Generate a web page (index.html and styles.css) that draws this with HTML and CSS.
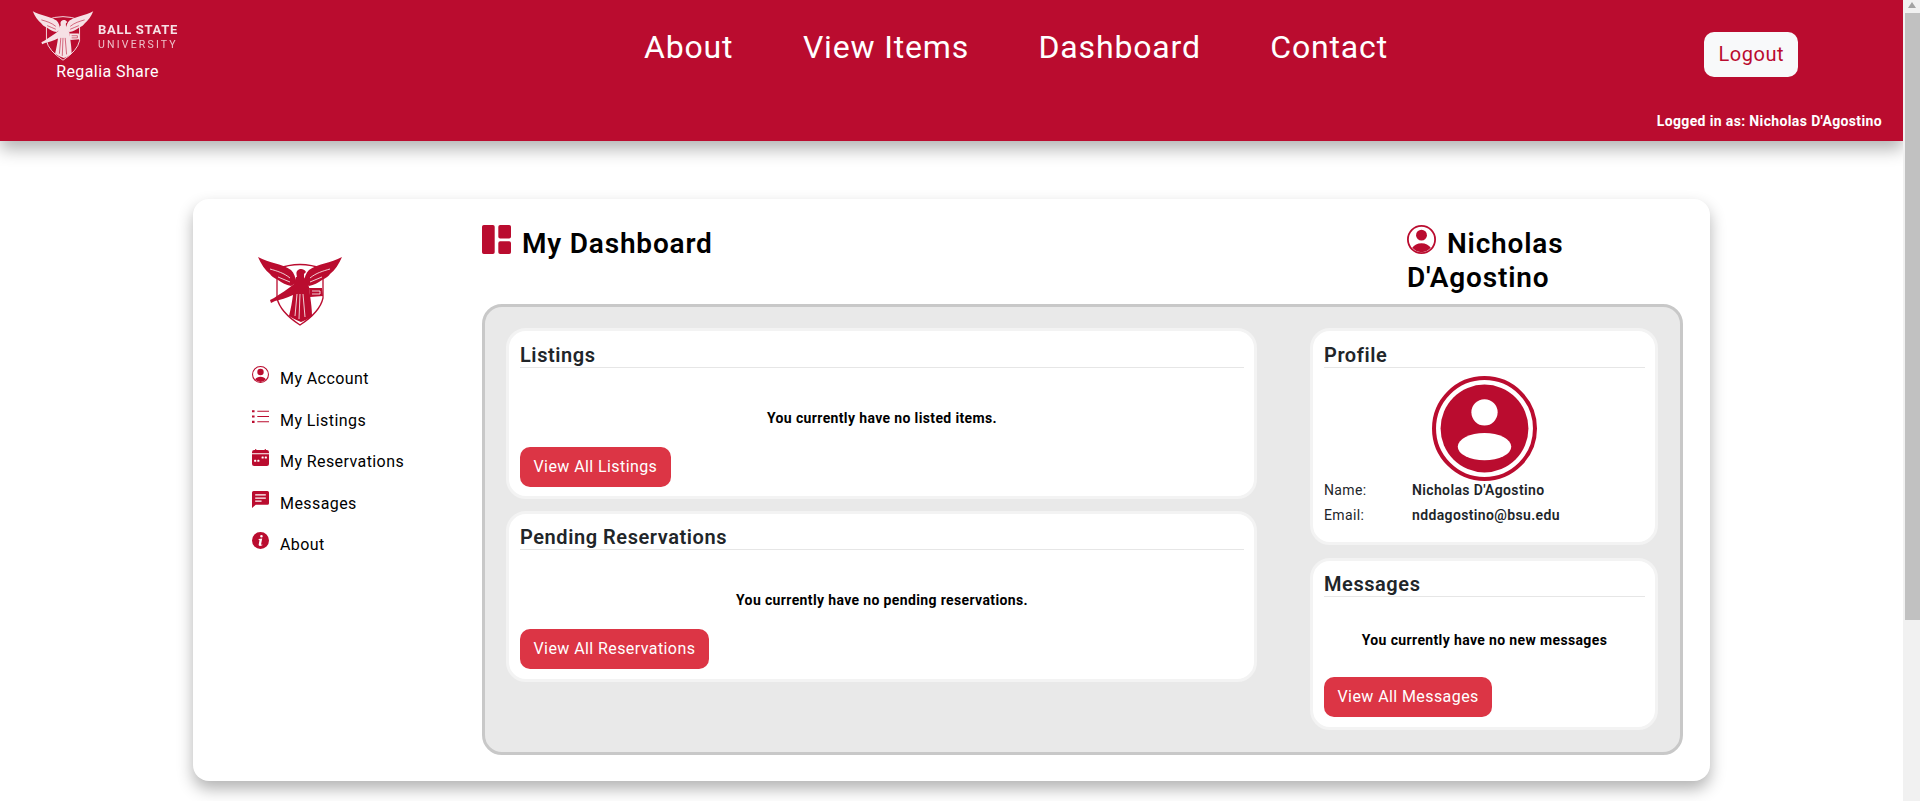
FILE: index.html
```html
<!DOCTYPE html>
<html lang="en">
<head>
    <meta charset="UTF-8">
    <meta name="viewport" content="width=device-width, initial-scale=1.0">
    <title>Regalia Share - My Dashboard</title>
    <link rel="stylesheet" href="styles.css">
</head>
<body>
    <svg class="icon-defs" width="0" height="0">
        <symbol id="emblem" viewBox="0 0 100 80">
            <path d="M27 19 Q50 10 73 19 L73 48 Q70 62 50 75 Q30 62 27 48 Z" fill="none" stroke="currentColor" stroke-width="1.3"/>
            <path d="M8 7 C19 13 33 14 41 20 C44 23 46 28 46 33 L41 36 C36 35 32 33 28 30 C24 28 21 26 20 24 C15 20 11 14 8 7 Z" fill="currentColor"/>
            <path d="M92 7 C81 13 67 14 59 20 C56 23 54 28 54 33 L59 36 C64 35 68 33 72 30 C76 28 79 26 80 24 C85 20 89 14 92 7 Z" fill="currentColor"/>
            <path d="M20 19 C27 21 34 23 40 28 M28 27 C32 29 36 30 40 32 M80 19 C73 21 66 23 60 28 M72 27 C68 29 64 30 60 32" fill="none" stroke="var(--cut)" stroke-width=".8"/>
            <path d="M46.500 24 C46 19 53 17 56 22 L54 24 L54 28 L47 28 Z" fill="currentColor"/>
            <path d="M46 27 L54 27 C56 31 58 34 59 37 L60 45 C61 52 62 60 62 66 C58 69 54 71 51 72 C46 70 42 68 39 66 C41 58 42 52 43 45 C37 48 30 50 25 51 L21 53 L20 50 L24 48 C30 44 38 39 44 34 Z" fill="currentColor"/>
            <path d="M59 38 L72 38 L73 46 L60 47 Z" fill="currentColor"/>
            <path d="M47 44 L45 66 M50 44 L49 69 M53 44 L55 67 M62 41 L70 41 L70 44 L62 44" fill="none" stroke="var(--cut)" stroke-width=".8"/>
        </symbol>
        <symbol id="person-circle" viewBox="0 0 16 16">
            <circle cx="8" cy="5.6" r="3" fill="currentColor"/>
            <path d="M2.9 12.6C3.9 10.9 5.8 10 8 10s4.100.9 5.100 2.600A7 7 0 0 1 8 15a7 7 0 0 1-5.100-2.400z" fill="currentColor"/>
            <circle cx="8" cy="8" r="7.500" fill="none" stroke="currentColor"/>
        </symbol>
        <symbol id="list-ul" viewBox="0 0 16 16">
            <path d="M5 2.500h11v1H5zM5 7.500h11v1H5zM5 12.500h11v1H5z" fill="currentColor"/>
            <path d="M0 2h2.400v2H0zM0 7h2.400v2H0zM0 12h2.400v2H0z" fill="currentColor"/>
        </symbol>
        <symbol id="calendar" viewBox="0 0 16 16">
            <path d="M3 0h1v1h8V0h1v1h1a2 2 0 0 1 2 2v1H0V3a2 2 0 0 1 2-2h1zM0 5h16v9a2 2 0 0 1-2 2H2a2 2 0 0 1-2-2zm9.500 2a.5.5 0 0 0-.5.5v1c0 .3.200.5.500.5h1c.3 0 .5-.2.500-.5v-1a.5.5 0 0 0-.5-.5zm3 0a.5.5 0 0 0-.5.5v1c0 .3.200.5.500.5h1c.3 0 .5-.2.500-.5v-1a.5.5 0 0 0-.5-.5zm-10 3a.5.5 0 0 0-.5.5v1c0 .3.200.5.500.5h1c.3 0 .5-.2.500-.5v-1a.5.5 0 0 0-.5-.5zm3 0a.5.5 0 0 0-.5.5v1c0 .3.200.5.500.5h1c.3 0 .5-.2.500-.5v-1a.5.5 0 0 0-.5-.5z" fill="currentColor" fill-rule="evenodd"/>
        </symbol>
        <symbol id="chat" viewBox="0 0 16 16">
            <path d="M1.500 0A1.500 1.500 0 0 0 0 1.500V16l3.500-3h11a1.500 1.500 0 0 0 1.500-1.500v-10A1.500 1.500 0 0 0 14.500 0zM3 3h10v1.200H3zM3 6h10v1.200H3zM3 9h6v1.200H3z" fill="currentColor" fill-rule="evenodd"/>
        </symbol>
        <symbol id="info" viewBox="0 0 16 16">
            <path d="M8 0a8 8 0 1 0 0 16A8 8 0 0 0 8 0zm.9 2.800a1.200 1.200 0 1 1 0 2.400 1.200 1.200 0 0 1 0-2.400zM6.300 6.600l3.300-.4-1 5.200c-.1.500.1.700.4.600l.8-.3-.1.800c-.9.500-1.500.7-2.200.7-.9 0-1.400-.6-1.200-1.500l.7-3.700c0-.3-.1-.4-.4-.4l-.4-.1z" fill="currentColor" fill-rule="evenodd"/>
        </symbol>
        <symbol id="dashboard" viewBox="0 0 16 16">
            <path d="M1 0h5a1 1 0 0 1 1 1v14a1 1 0 0 1-1 1H1a1 1 0 0 1-1-1V1a1 1 0 0 1 1-1zM10 0h5a1 1 0 0 1 1 1v5.500a1 1 0 0 1-1 1h-5a1 1 0 0 1-1-1V1a1 1 0 0 1 1-1zM10 9h5a1 1 0 0 1 1 1v5a1 1 0 0 1-1 1h-5a1 1 0 0 1-1-1v-5a1 1 0 0 1 1-1z" fill="currentColor"/>
        </symbol>
    </svg>

    <div class="page">
        <header class="site-header">
            <a class="brand" href="#">
                <span class="brand-logo">
                    <svg class="brand-emblem"><use href="#emblem"/></svg>
                    <span class="brand-words">
                        <span class="brand-ball">BALL STATE</span>
                        <span class="brand-uni">UNIVERSITY</span>
                    </span>
                </span>
                <span class="brand-name">Regalia Share</span>
            </a>
            <nav class="main-nav">
                <a href="#">About</a>
                <a href="#">View Items</a>
                <a href="#">Dashboard</a>
                <a href="#">Contact</a>
            </nav>
            <a class="logout" href="#">Logout</a>
            <p class="logged-in">Logged in as: Nicholas D'Agostino</p>
        </header>

        <main class="dash-card">
            <aside class="side">
                <svg class="side-emblem"><use href="#emblem"/></svg>
                <ul class="side-menu">
                    <li><svg><use href="#person-circle"/></svg><a href="#">My Account</a></li>
                    <li><svg><use href="#list-ul"/></svg><a href="#">My Listings</a></li>
                    <li><svg><use href="#calendar"/></svg><a href="#">My Reservations</a></li>
                    <li><svg><use href="#chat"/></svg><a href="#">Messages</a></li>
                    <li><svg><use href="#info"/></svg><a href="#">About</a></li>
                </ul>
            </aside>

            <section class="dash-main">
                <div class="dash-head">
                    <h3 class="dash-title"><svg><use href="#dashboard"/></svg>My Dashboard</h3>
                    <h3 class="dash-user"><svg><use href="#person-circle"/></svg>Nicholas D'Agostino</h3>
                </div>

                <div class="panel-wrap">
                    <div class="col-left">
                        <div class="box">
                            <h5>Listings</h5>
                            <p class="empty">You currently have no listed items.</p>
                            <a class="btn-red" href="#">View All Listings</a>
                        </div>
                        <div class="box box-pending">
                            <h5>Pending Reservations</h5>
                            <p class="empty">You currently have no pending reservations.</p>
                            <a class="btn-red" href="#">View All Reservations</a>
                        </div>
                    </div>
                    <div class="col-right">
                        <div class="box box-profile">
                            <h5>Profile</h5>
                            <svg class="avatar" viewBox="0 0 104 104">
                                <circle cx="52" cy="52" r="50" fill="none" stroke="#ba0c2f" stroke-width="4"/>
                                <circle cx="52" cy="52" r="43.500" fill="#ba0c2f"/>
                                <circle cx="52" cy="36" r="13" fill="#fff"/>
                                <ellipse cx="52" cy="70" rx="26.500" ry="13.500" fill="#fff"/>
                            </svg>
                            <div class="info-row"><span>Name:</span><b>Nicholas D'Agostino</b></div>
                            <div class="info-row"><span>Email:</span><b>nddagostino@bsu.edu</b></div>
                        </div>
                        <div class="box box-messages">
                            <h5>Messages</h5>
                            <p class="empty">You currently have no new messages</p>
                            <a class="btn-red" href="#">View All Messages</a>
                        </div>
                    </div>
                </div>
            </section>
        </main>
    </div>

    <div class="fake-scrollbar"><i class="arrow"></i><i class="thumb"></i></div>
</body>
</html>
```

FILE: styles.css
```css
* {
    box-sizing: border-box;
    letter-spacing: 0.026em;
}
html, body {
    height: 801px;
    overflow: hidden;
}
body {
    margin: 0;
    font-family: Roboto, "Liberation Sans", sans-serif;
    font-size: 16px;
    color: #000;
    background-color: #fff;
}
a {
    text-decoration: none;
    color: inherit;
}
.icon-defs {
    position: absolute;
}
.page {
    width: 1903px;
}

/* header */
.site-header {
    position: relative;
    height: 141px;
    display: flex;
    background-color: #ba0c2f;
    color: #fff;
    box-shadow: 0 8px 16px rgba(0, 0, 0, 0.3);
}
.brand {
    width: 147px;
    margin: 10px 0 0 33px;
    display: flex;
    flex-direction: column;
    align-items: center;
}
.brand-logo {
    width: 147px;
    height: 52px;
    display: flex;
    opacity: 0.88;
    filter: blur(0.3px);
}
.brand-emblem {
    --cut: #ba0c2f;
    width: 72px;
    height: 60px;
    flex: none;
    margin: -5px 0 0 -6px;
}
.brand-words {
    display: flex;
    flex-direction: column;
    margin: 12px 0 0 -1px;
    white-space: nowrap;
}
.brand-ball {
    font-size: 13px;
    line-height: 16px;
    font-weight: 700;
    letter-spacing: 0.700px;
}
.brand-uni {
    font-size: 10.500px;
    line-height: 13px;
    letter-spacing: 2.200px;
    opacity: 0.85;
}
.brand-name {
    margin-left: 2px;
    font-size: 16px;
    line-height: 19px;
    white-space: nowrap;
}
.main-nav {
    display: flex;
    gap: 69.500px;
    margin: 26px 0 0 464px;
    height: 42px;
    font-size: 32px;
    line-height: 42px;
}
.logout {
    height: 45px;
    margin: 32px 105px 0 auto;
    padding: 0 14px;
    line-height: 45px;
    font-size: 20px;
    background-color: #f8f9fa;
    color: #ba0c2f;
    border-radius: 10px;
}
.logged-in {
    position: absolute;
    right: 21px;
    top: 113px;
    margin: 0;
    font-size: 14px;
    line-height: 16px;
    font-weight: 700;
}

/* main card */
.dash-card {
    width: 1517px;
    height: 582px;
    margin: 58px 0 0 193px;
    display: flex;
    background-color: #fff;
    border-radius: 16px;
    box-shadow: 0 8px 16px rgba(0, 0, 0, 0.3);
}
.side {
    width: 289px;
    flex: none;
    padding: 51px 0 0 59px;
}
.side-emblem {
    --cut: #fff;
    display: block;
    width: 100px;
    height: 80px;
    margin-left: -2px;
    color: #ba0c2f;
}
.side-menu {
    list-style: none;
    margin: 36px 0 0;
    padding: 0;
}
.side-menu li {
    height: 41.600px;
    display: flex;
    align-items: flex-start;
    font-size: 16px;
    line-height: 19px;
}
.side-menu svg {
    width: 17px;
    height: 17px;
    margin: 0 11px 0 0;
    color: #ba0c2f;
    flex: none;
}
.side-menu a {
    margin-top: 3px;
}
.dash-main {
    width: 1201px;
    flex: none;
}
.dash-head {
    display: flex;
    height: 105px;
    padding-top: 26px;
}
.dash-head h3 {
    margin: 0;
    font-size: 28px;
    line-height: 33.600px;
    font-weight: 600;
    letter-spacing: 0.029em;
}
.dash-head svg {
    width: 29px;
    height: 29px;
    margin-right: 11px;
    color: #ba0c2f;
    vertical-align: -1px;
}
.dash-title {
    width: 925px;
}
.dash-user {
    width: 200px;
}

/* inner panel */
.panel-wrap {
    height: 451px;
    display: flex;
    gap: 53px;
    padding: 21px 22px 0 21px;
    background-color: #e9e9e9;
    border: 3px solid #c8c8c8;
    border-radius: 20px;
}
.col-left {
    width: 751px;
    display: flex;
    flex-direction: column;
    gap: 12px;
}
.col-right {
    width: 348px;
    display: flex;
    flex-direction: column;
    gap: 13px;
}
.box {
    height: 171px;
    padding: 0 10px 0 11px;
    background-color: #fff;
    border: 3px solid #f3f3f3;
    border-radius: 20px;
}
.box-profile {
    height: 217px;
}
.box-messages {
    height: 172px;
}
.box h5 {
    margin: 0;
    padding-top: 12px;
    font-size: 20px;
    line-height: 24px;
    font-weight: 600;
    letter-spacing: 0.028em;
    color: #212529;
    border-bottom: 1px solid #e6e6e6;
}
.box-pending h5,
.box-messages h5 {
    padding-top: 11px;
}
.empty {
    margin: 42px 0 0;
    height: 37px;
    font-size: 14px;
    line-height: 17px;
    font-weight: 700;
    text-align: center;
}
.box-messages .empty {
    margin-top: 35px;
    height: 45px;
}
.btn-red {
    display: inline-block;
    height: 40px;
    padding: 0 13.500px;
    line-height: 39px;
    color: #fff;
    background-color: #dc3545;
    border-radius: 10px;
}
.avatar {
    display: block;
    width: 105px;
    height: 105px;
    margin: 8px auto -1px;
    position: relative;
}
.info-row {
    display: flex;
    height: 25px;
    font-size: 14px;
    line-height: 20px;
    color: #212529;
}
.info-row span {
    width: 88px;
    flex: none;
}
.info-row b {
    font-weight: 600;
}

/* browser scrollbar, part of the screenshot */
.fake-scrollbar {
    position: fixed;
    top: 0;
    right: 0;
    width: 17px;
    height: 801px;
    background-color: #f1f1f1;
}
.fake-scrollbar .thumb {
    position: absolute;
    left: 2px;
    top: 13px;
    width: 15px;
    height: 607px;
    background-color: #c1c1c1;
}
.fake-scrollbar .arrow {
    position: absolute;
    left: 5px;
    top: 2px;
    border: 4.500px solid transparent;
    border-top: 0;
    border-bottom: 6px solid #a3a3a3;
}
```
